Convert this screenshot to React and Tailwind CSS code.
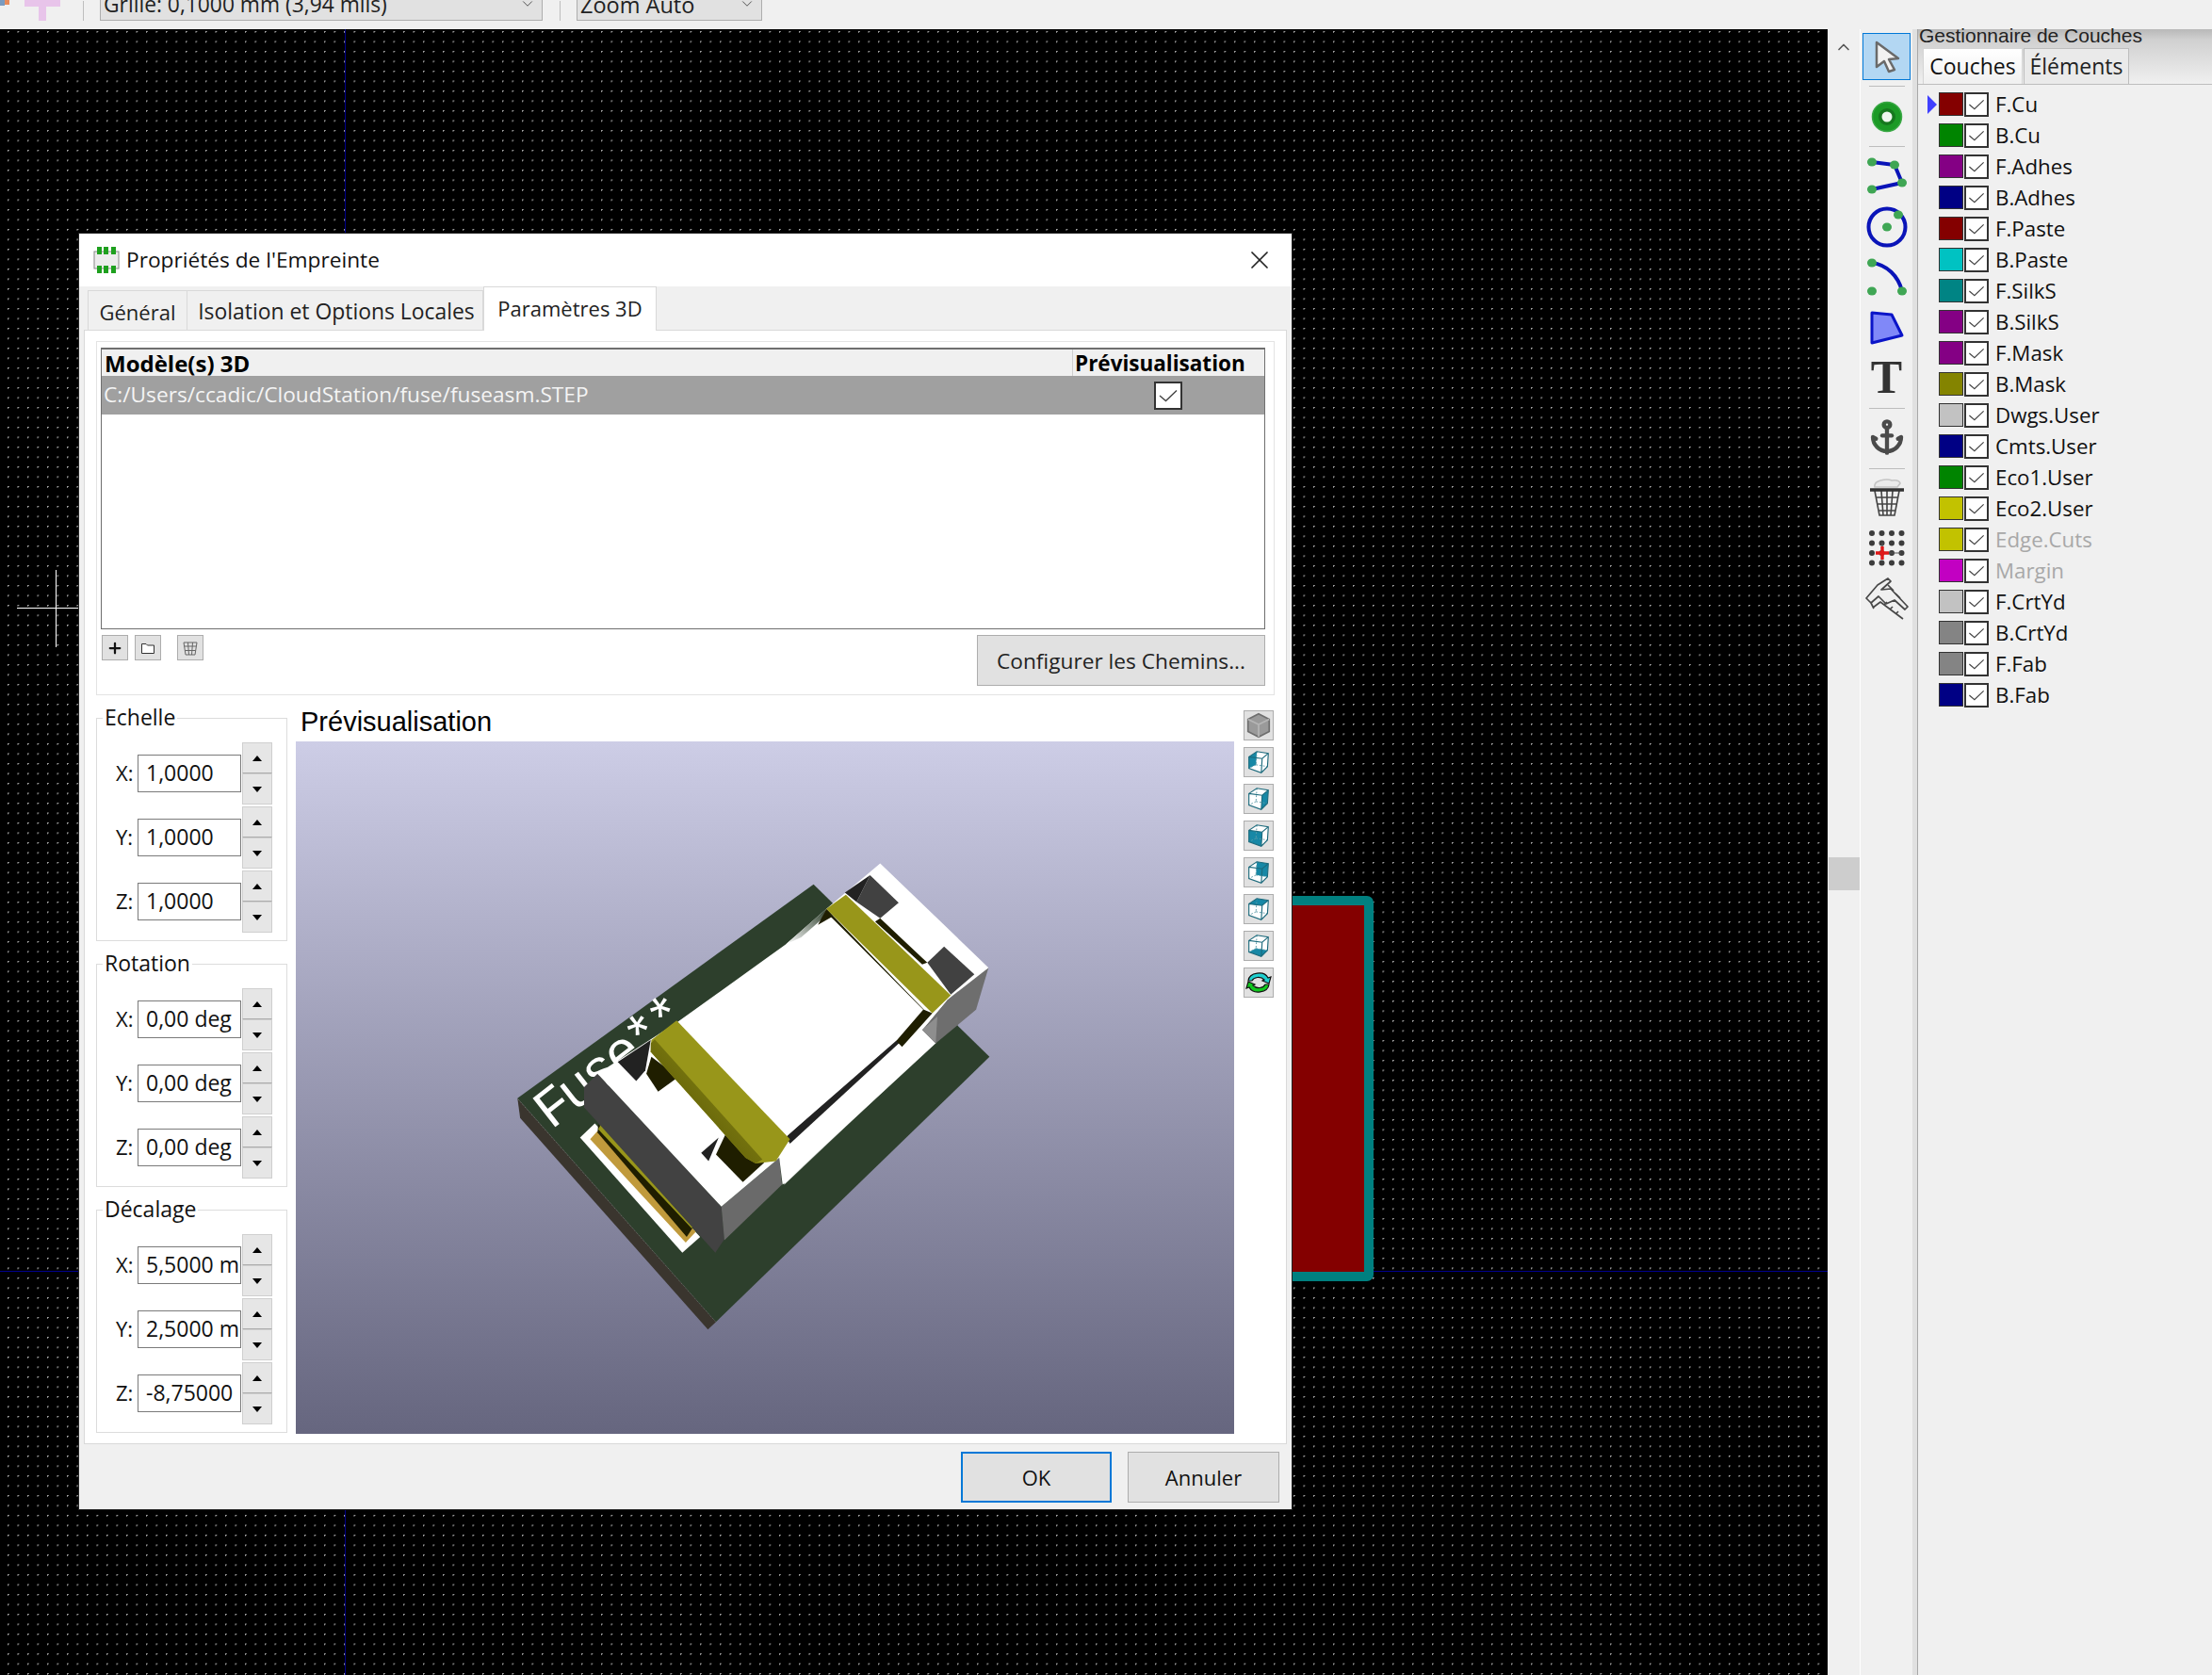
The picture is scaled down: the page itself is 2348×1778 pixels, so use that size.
import { Anchor, ChevronDown, ChevronUp, Plus, X } from 'lucide-react'

const layers = [
  { name: 'F.Cu', color: 'bg-[#840000]', active: true },
  { name: 'B.Cu', color: 'bg-[#008400]' },
  { name: 'F.Adhes', color: 'bg-[#840084]' },
  { name: 'B.Adhes', color: 'bg-[#000084]' },
  { name: 'F.Paste', color: 'bg-[#840000]' },
  { name: 'B.Paste', color: 'bg-[#00c2c2]' },
  { name: 'F.SilkS', color: 'bg-[#008484]' },
  { name: 'B.SilkS', color: 'bg-[#840084]' },
  { name: 'F.Mask', color: 'bg-[#840084]' },
  { name: 'B.Mask', color: 'bg-[#848400]' },
  { name: 'Dwgs.User', color: 'bg-[#c2c2c2]' },
  { name: 'Cmts.User', color: 'bg-[#000084]' },
  { name: 'Eco1.User', color: 'bg-[#008400]' },
  { name: 'Eco2.User', color: 'bg-[#c2c200]' },
  { name: 'Edge.Cuts', color: 'bg-[#c2c200]', dim: true },
  { name: 'Margin', color: 'bg-[#c200c2]', dim: true },
  { name: 'F.CrtYd', color: 'bg-[#c2c2c2]' },
  { name: 'B.CrtYd', color: 'bg-[#848484]' },
  { name: 'F.Fab', color: 'bg-[#848484]' },
  { name: 'B.Fab', color: 'bg-[#000084]' },
]

const groups = [
  { title: 'Echelle', values: ['1,0000', '1,0000', '1,0000'] },
  { title: 'Rotation', values: ['0,00 deg', '0,00 deg', '0,00 deg'] },
  { title: 'Décalage', values: ['5,5000 mm', '2,5000 mm', '-8,75000'] },
]

const cubeFaces = {
  left: '5,10 14,4 13,19 5,23',
  right: '20,12 27,6 26,21 19,28',
  front: '5,10 20,12 19,28 5,23',
  back: '14,4 27,6 26,21 13,19',
  top: '5,10 14,4 27,6 20,12',
  bottom: '5,23 13,19 26,21 19,28',
}

function Check({ size = 26 }) {
  return (
    <svg width={size} height={size} viewBox="0 0 26 26" fill="none">
      <path d="M4 13 L10.5 18.5 L22 7.5" stroke="#444" strokeWidth="1.4" />
    </svg>
  )
}

function CubeIcon({ face }) {
  return (
    <svg width="30" height="30" viewBox="0 0 32 32">
      <polygon points="5,10 14,4 27,6 26,21 19,28 5,23" fill="#fff" />
      <polygon points={cubeFaces[face]} fill="#1788a6" />
      <path d="M14 4 L13 19 M13 19 L5 23 M13 19 L26 21" stroke="#5a9aa8" strokeWidth="1" strokeDasharray="2 2" fill="none" />
      <path d="M5 10 L14 4 L27 6 L26 21 L19 28 L5 23 Z M5 10 L20 12 L27 6 M20 12 L19 28" stroke="#1c6a7c" strokeWidth="1.2" fill="none" />
    </svg>
  )
}

function ViewButton({ children }) {
  return <div className="w-[32px] h-[32px] bg-[#e1e1e1] border border-[#adadad] flex items-center justify-center">{children}</div>
}

function SpinRow({ axis, value }) {
  return (
    <div className="flex items-center h-[66px]">
      <span className="w-[24px] pl-[1px] text-[22px] leading-[28px] pb-[2px] text-[#111]">{axis}:</span>
      <div className="w-[110px] h-[40px] border border-[#7a7a7a] bg-white pl-[8px] text-[23px] leading-[36px] text-[#111] overflow-hidden whitespace-nowrap">{value}</div>
      <div className="ml-[1px] w-[32px] flex flex-col">
        <div className="h-[33px] bg-[#e6e6e6] border border-[#cfcfcf] border-b-[#adadad] flex items-center justify-center">
          <div className="w-0 h-0 border-x-[5px] border-x-transparent border-b-[6px] border-b-black" />
        </div>
        <div className="h-[33px] bg-[#e6e6e6] border border-[#cfcfcf] flex items-center justify-center">
          <div className="w-0 h-0 border-x-[5px] border-x-transparent border-t-[6px] border-t-black" />
        </div>
      </div>
    </div>
  )
}

function SpinGroup({ title, values }) {
  return (
    <div className="relative w-[203px] h-[237px] border border-[#dcdcdc] pl-[19px] pt-[25px]">
      <span className="absolute left-[6px] -top-[18px] bg-white px-[2px] text-[23px] text-[#111] leading-[32px]">{title}</span>
      <div className="flex flex-col gap-[2px]">
        {values.map((v, i) => (
          <SpinRow key={i} axis={['X', 'Y', 'Z'][i]} value={v} />
        ))}
      </div>
    </div>
  )
}

function Model() {
  return (
    <svg width="560" height="560" viewBox="0 0 1568 1568">
      <defs>
        <linearGradient id="strapEdge" x1="0" y1="1" x2="1" y2="0">
          <stop offset="0" stopColor="#4a4900" />
          <stop offset="1" stopColor="#98961a" />
        </linearGradient>
        <linearGradient id="fade2" x1="1" y1="0" x2="0" y2="0">
          <stop offset="0" stopColor="#ffffff" stopOpacity="0" />
          <stop offset="1" stopColor="#ffffff" />
        </linearGradient>
        <linearGradient id="notch" x1="0" y1="1" x2="1" y2="0">
          <stop offset="0" stopColor="#ffffff" />
          <stop offset="1" stopColor="#2d3f2c" />
        </linearGradient>
      </defs>
      {/* board */}
      <polygon points="82,803 672,1468 648,1490 90,862" fill="#3a352e" />
      <path d="M84 806 L672 1468" stroke="#8b8b80" strokeWidth="2" strokeDasharray="5 5" />
      <polygon points="962,167 1485,680 672,1468 82,803" fill="#2d3f2c" />
      <text x="182" y="898" transform="rotate(-38 182 898)" fontFamily="'Liberation Mono', monospace" fontSize="165" fill="#fff" textLength="530">Fuse**</text>
      {/* silk + pad at the connector front */}
      <polygon points="268,920 312,878 625,1215 572,1262" fill="#fff" />
      <polygon points="298,925 320,900 612,1200 582,1232" fill="#c09a3c" />
      <polygon points="320,905 322,880 608,1180 585,1215" fill="#1f1e00" />
      <polygon points="338,866 615,1165 600,1190 322,895" fill="#98961a" />
      {/* connector body */}
      <polygon points="320,730 280,770 280,830 670,1262 697,1222 688,1125" fill="#424242" />
      <polygon points="688,1125 860,980 868,1060 697,1225" fill="#6a6a6a" />
      <polygon points="320,730 560,575 880,345 1000,240 1160,105 1482,415 1325,640 870,1060 860,980 688,1125" fill="#fff" />
      <polygon points="1482,415 1445,540 1325,640 1285,600 1360,510" fill="#6e6e6e" />
      <polygon points="1285,600 1360,510 1440,435 1482,415 1400,470 1330,540" fill="#fff" />
      <polygon points="1285,600 1330,560 1325,640" fill="#8e8e8e" />
      <polygon points="870,985 1210,650 1260,640 1320,640 875,1060" fill="url(#fade2)" />
      <polygon points="880,345 925,325 985,272 1000,240" fill="url(#notch)" />
      {/* slot */}
      <polygon points="880,918 1240,590 1252,606 892,938" fill="#222" />
      {/* recesses */}
      <polygon points="1130,140 1215,222 1160,268 1090,220" fill="#414141" />
      <polygon points="1055,192 1130,140 1090,220" fill="#222" />
      <polygon points="1350,352 1440,435 1370,495 1300,400" fill="#414141" />
      <polygon points="1160,268 1300,400 1285,405 1145,278" fill="#1f1e00" />
      <polygon points="380,695 478,630 462,720 435,752" fill="#222" />
      <polygon points="628,965 680,920 650,990" fill="#222" />
      <polygon points="465,730 480,680 560,740 500,783" fill="#1f1e00" />
      <polygon points="672,970 705,900 815,995 752,1052" fill="#1f1e00" />
      <polygon points="975,288 1000,240 1020,262" fill="#1f1e00" />
      <polygon points="1000,240 1290,540 1315,550 1225,650 1210,635" fill="#1f1e00" />
      <polygon points="1015,265 1288,540 1210,630 880,918 600,600 880,380" fill="#fff" />
      {/* straps */}
      <polygon points="480,630 555,572 892,925 850,990 790,997 760,980 478,665" fill="#98961a" />
      <polygon points="478,640 490,628 810,985 790,997 760,980 478,665" fill="url(#strapEdge)" />
      <polygon points="1000,240 1058,198 1370,497 1315,550" fill="#98961a" />
    </svg>
  )
}

export default function App() {
  return (
    <div className="w-[2348px] h-[1778px] overflow-hidden flex flex-col bg-[#f0f0f0] font-['Open_Sans',sans-serif] text-[#111]">
      {/* Top toolbar, cut off by the screenshot */}
      <div className="h-[31px] shrink-0 bg-[#f0f0f0] flex items-end overflow-hidden pb-[9px]">
        <svg className="ml-0 mb-[-9px]" width="84" height="31" viewBox="0 0 84 31">
          <rect x="0" y="0" width="5" height="6" fill="#7a9bc0" />
          <rect x="5" y="0" width="5" height="5" fill="#e88a5a" />
          <path d="M26 0 H64 V7 H49 V22 H41 V7 H26 Z" fill="#e8c4ea" />
        </svg>
        <div className="w-px h-[21px] bg-[#bdbdbd] ml-[4px]" />
        <div className="ml-[17px] w-[470px] h-[22px] bg-[#e1e1e1] border-b border-x border-[#adadad] relative overflow-hidden">
          <span className="absolute left-[3px] bottom-[1px] text-[22.8px] leading-[30px] whitespace-nowrap text-[#222]">Grille: 0,1000 mm (3,94 mils)</span>
          <ChevronDown className="absolute right-[6px] top-[-5px] text-[#444]" size={18} strokeWidth={1.2} />
        </div>
        <div className="w-px h-[21px] bg-[#bdbdbd] ml-[18px]" />
        <div className="ml-[17px] w-[197px] h-[22px] bg-[#e1e1e1] border-b border-x border-[#adadad] relative overflow-hidden">
          <span className="absolute left-[3px] bottom-[1px] text-[23.5px] leading-[30px] whitespace-nowrap text-[#222]">Zoom Auto</span>
          <ChevronDown className="absolute right-[6px] top-[-5px] text-[#444]" size={18} strokeWidth={1.2} />
        </div>
      </div>

      <div className="flex-1 flex min-h-0">
        {/* PCB canvas */}
        <div className="relative w-[1940px] h-full bg-black overflow-hidden bg-[radial-gradient(circle_at_0.5px_0.5px,#a6a6a6_0.9px,transparent_1.1px)] bg-size-[10.5px_10.5px] bg-position-[8px_2px]">
          <div className="absolute left-[366px] top-0 bottom-0 w-px bg-[#00008c]" />
          <div className="absolute left-0 right-0 top-[1318px] h-px bg-[#00008c]" />
          <div className="absolute left-[59px] top-[574px] w-px h-[82px] bg-white" />
          <div className="absolute left-[18px] top-[614px] w-[65px] h-px bg-white" />
          {/* copper pad */}
          <div className="absolute left-[1000px] top-[920px] w-[458px] h-[409px] bg-[#840000] border-[10px] border-[#008080] rounded-tr-[7px] rounded-br-[7px]" />

          {/* Dialog window */}
          <div className="absolute left-[84px] top-[217px] w-[1287px] h-[1354px] bg-[#f0f0f0] flex flex-col shadow-[0_0_0_1px_#222]">
            <div className="h-[56px] shrink-0 bg-white flex items-center pl-[14px]">
              <svg width="30" height="30" viewBox="0 0 30 30">
                <rect x="2" y="6" width="26" height="18" fill="#ececec" stroke="#888" />
                <path d="M5 1 h5 v8 h-5 Z M12 1 h5 v8 h-5 Z M20 1 h5 v8 h-5 Z M5 21 h5 v8 h-5 Z M12 21 h5 v8 h-5 Z M20 21 h5 v8 h-5 Z" fill="#1ea01e" />
              </svg>
              <span className="ml-[6px] text-[22.7px]">Propriétés de l'Empreinte</span>
              <X className="ml-auto mr-[18px] text-[#222]" size={32} strokeWidth={1.3} />
            </div>

            {/* Tabs */}
            <div className="h-[46px] shrink-0 flex items-end pl-[9px]">
              <div className="h-[42px] w-[106px] border border-b-0 border-[#d9d9d9] flex items-center justify-center pt-[3px] text-[22px] text-[#222]">Général</div>
              <div className="h-[42px] w-[314px] border-y border-r border-b-0 border-[#d9d9d9] flex items-center justify-center pt-[3px] pl-[3px] text-[22.9px] text-[#222] whitespace-nowrap">Isolation et Options Locales</div>
              <div className="h-[47px] -mb-px relative w-[184px] bg-white border border-b-0 border-[#d9d9d9] flex items-start justify-center pt-[6px] text-[22px] text-[#222]">Paramètres 3D</div>
            </div>

            {/* Page */}
            <div className="mx-[5px] h-[1183px] shrink-0 bg-white border border-[#d9d9d9] pl-[12px] pr-[12px] pt-[11px]">
              <div className="h-[376px] border border-[#e3e3e3] pl-[4px] pt-[6px]">
                <div className="w-[1236px] h-[299px] border border-[#6f6f6f] border-t-2 bg-white">
                  <div className="h-[28px] bg-[#f0f0f0] flex">
                    <div className="w-[1030px] pl-[3px] font-bold text-[24px] leading-[30px] text-black">Modèle(s) 3D</div>
                    <div className="flex-1 border-l border-[#cfcfcf] pl-[2px] font-bold text-[22.5px] leading-[30px] text-black whitespace-nowrap">Prévisualisation</div>
                  </div>
                  <div className="h-[41px] bg-[#a0a0a0] flex items-center relative">
                    <span className="pl-[2px] text-[22.7px] text-[#f4f4f4]">C:/Users/ccadic/CloudStation/fuse/fuseasm.STEP</span>
                    <div className="absolute left-[1117px] top-[6px] w-[30px] h-[30px] bg-white border-2 border-[#333] flex items-center justify-center">
                      <Check />
                    </div>
                  </div>
                </div>
                <div className="flex items-start pt-[6px]">
                  <div className="ml-[1px] w-[28px] h-[27px] bg-[#e1e1e1] border border-[#adadad] flex items-center justify-center">
                    <Plus size={18} strokeWidth={3} className="text-[#111]" />
                  </div>
                  <div className="ml-[7px] w-[28px] h-[27px] bg-[#e1e1e1] border border-[#adadad] flex items-center justify-center">
                    <svg width="16" height="14" viewBox="0 0 16 14" fill="#fff" stroke="#333">
                      <path d="M1.5 12.5 V2.5 H6 L7.5 4 H14.5 V12.5 Z" />
                    </svg>
                  </div>
                  <div className="ml-[17px] w-[28px] h-[27px] bg-[#e1e1e1] border border-[#adadad] flex items-center justify-center">
                    <svg width="16" height="16" viewBox="0 0 16 16" fill="none" stroke="#666" strokeWidth="1">
                      <path d="M1 2 H15 L13 15 H3 Z M5.5 2 L6.5 15 M10.5 2 L9.5 15 M1.8 6 H14.2 M2.5 10.5 H13.5" />
                    </svg>
                  </div>
                  <div className="ml-auto mr-[9px] w-[306px] h-[54px] bg-[#e1e1e1] border border-[#adadad] flex items-center justify-center pt-[2px] text-[22.7px] text-[#222]">Configurer les Chemins...</div>
                </div>
              </div>

              <div className="flex pt-[16px]">
                <div className="w-[203px] pt-[8px] flex flex-col gap-[24px]">
                  {groups.map((g) => (
                    <SpinGroup key={g.title} title={g.title} values={g.values} />
                  ))}
                </div>
                <div className="ml-[9px] w-[996px]">
                  <div className="h-[33px] pl-[5px] font-['Liberation_Sans',sans-serif] text-[29px] leading-[24px] text-black">Prévisualisation</div>
                  <div className="h-[735px] bg-linear-to-b from-[#cdcde6] to-[#66667f] pl-[206px] pt-[92px]">
                    <Model />
                  </div>
                </div>
                <div className="ml-[10px] w-[32px] flex flex-col gap-[7px]">
                  <ViewButton>
                    <svg width="30" height="30" viewBox="0 0 32 32" fill="#9a9a9a" stroke="#6e6e6e" strokeWidth="1.8">
                      <path d="M16 3 L28 9 V23 L16 29 L4 23 V9 Z" />
                      <path d="M4 9 L16 15 L28 9 M16 15 V29" fill="none" stroke="#b5b5b5" />
                    </svg>
                  </ViewButton>
                  {['left', 'right', 'front', 'back', 'top', 'bottom'].map((f) => (
                    <ViewButton key={f}>
                      <CubeIcon face={f} />
                    </ViewButton>
                  ))}
                  <ViewButton>
                    <svg width="28" height="28" viewBox="0 0 28 28" stroke="#111" strokeWidth="1.2">
                      <path d="M3 12 C4 3 20 1 24 9 L27 8 L25 15 L18 12 L20 11 C16 7 9 8 7 12 Z" fill="#1fd0d0" />
                      <path d="M25 16 C24 25 8 27 4 19 L1 20 L3 13 L10 16 L8 17 C12 21 19 20 21 16 Z" fill="#10c81e" />
                    </svg>
                  </ViewButton>
                </div>
              </div>
            </div>

            {/* Footer */}
            <div className="relative flex-1 flex items-start justify-end pt-[8px] pr-[13px] gap-[17px]">
              <div className="w-[160px] h-[54px] bg-[#e1e1e1] border-2 border-[#0078d7] flex items-center justify-center text-[22px] text-[#111]">OK</div>
              <div className="w-[161px] h-[54px] bg-[#e1e1e1] border border-[#adadad] flex items-center justify-center text-[22px] text-[#111]">Annuler</div>
            </div>
          </div>
        </div>

        {/* Scroll strip */}
        <div className="w-[35px] shrink-0 bg-[#f0f0f0] border-r border-white flex flex-col items-center relative">
          <ChevronUp className="mt-[9px] text-[#555]" size={20} strokeWidth={2} />
          <div className="absolute left-[1px] top-[879px] w-[33px] h-[35px] bg-[#cdcdcd]" />
        </div>

        {/* Tool palette */}
        <div className="w-[55px] shrink-0 flex flex-col items-center pt-[4px] bg-[#f0f0f0]">
          <div className="w-[51px] h-[50px] bg-[#b3d7f3] border border-[#0078d7] flex items-center justify-center">
            <svg width="32" height="36" viewBox="0 0 32 36">
              <path d="M5 3 L28 20 L18 21 L24 32 L18 34 L13 23 L5 29 Z" fill="#f2f2f2" stroke="#6a6a6a" strokeWidth="2.5" strokeLinejoin="round" />
            </svg>
          </div>
          <div className="w-[38px] h-px my-[6px] bg-[#bdbdbd]" />
          <div className="h-[52px] flex items-center">
            <svg width="34" height="34" viewBox="0 0 34 34">
              <circle cx="17" cy="17" r="15.5" fill="#1c9a26" stroke="#3aa845" strokeWidth="1.5" />
              <circle cx="17" cy="17" r="9" fill="#16781e" />
              <circle cx="17" cy="17" r="5.5" fill="#eef6ee" />
            </svg>
          </div>
          <div className="w-[38px] h-px my-[5px] bg-[#bdbdbd]" />
          <div className="h-[53px] flex items-center">
            <svg width="44" height="44" viewBox="0 0 44 44" fill="#3fa654">
              <path d="M6 6 L30 9 L38 28 L6 35" fill="none" stroke="#0a14b8" strokeWidth="4" />
              <ellipse cx="6" cy="6" rx="5" ry="4.5" /><ellipse cx="30" cy="9" rx="5" ry="4.5" /><ellipse cx="38" cy="28" rx="5" ry="4.5" /><ellipse cx="6" cy="35" rx="5" ry="4.5" />
            </svg>
          </div>
          <div className="h-[54px] flex items-center">
            <svg width="44" height="44" viewBox="0 0 44 44" fill="#3fa654">
              <circle cx="22" cy="22" r="19.5" fill="none" stroke="#0a14b8" strokeWidth="4" />
              <ellipse cx="22" cy="22" rx="5" ry="4.5" /><ellipse cx="34" cy="9" rx="5" ry="4.5" />
            </svg>
          </div>
          <div className="h-[53px] flex items-center">
            <svg width="44" height="44" viewBox="0 0 44 44" fill="#3fa654">
              <path d="M6 6 C22 8 34 20 38 36" fill="none" stroke="#0a14b8" strokeWidth="4" />
              <ellipse cx="6" cy="6" rx="5" ry="4.5" /><ellipse cx="6" cy="36" rx="5" ry="4.5" /><ellipse cx="38" cy="36" rx="5" ry="4.5" />
            </svg>
          </div>
          <div className="h-[53px] flex items-center">
            <svg width="38" height="36" viewBox="0 0 38 36">
              <path d="M3 2 L24 4 L35 26 L3 34 Z" fill="#8088f8" stroke="#0a14c8" strokeWidth="3" strokeLinejoin="round" />
            </svg>
          </div>
          <div className="h-[54px] flex items-center justify-center pb-[2px] font-['Liberation_Serif',serif] font-bold text-[50px] leading-none text-[#333]">T</div>
          <div className="w-[38px] h-px my-[5px] bg-[#bdbdbd]" />
          <div className="h-[53px] flex items-center pb-[3px]">
            <Anchor size={40} strokeWidth={2.6} className="text-[#4a4a4a]" />
          </div>
          <div className="w-[38px] h-px my-[5px] bg-[#bdbdbd]" />
          <div className="h-[53px] flex items-center pb-[3px]">
            <svg width="38" height="42" viewBox="0 0 38 42" fill="none" stroke="#444" strokeWidth="1.6">
              <path d="M6 10 Q5 5 12 3 Q20 1 24 3 Q32 2 33 6 L30 10 Z" fill="#eaeaea" stroke="#c4c4c4" />
              <path d="M6 14 L11 40 H27 L32 14 M13 14 L15 40 M19 14 V40 M25 14 L23 40 M7 21 H31 M8.5 28 H29.5 M10 35 H28" />
              <path d="M1 13 H37" strokeWidth="3.5" stroke="#333" />
            </svg>
          </div>
          <div className="h-[53px] flex items-center pb-[2px]">
            <svg width="40" height="40" viewBox="0 0 40 40" fill="#3c3c3c">
              {[4, 14.5, 25, 35.5].map((x) => [4, 14.5, 25, 35.5].map((y) => <circle key={`${x}-${y}`} cx={x} cy={y} r="3" />))}
              <path d="M15 14.5 V25 M15 25 H35" stroke="#555" strokeWidth="1.2" />
              <path d="M15 18 V32 M8 25 H22" stroke="#e01818" strokeWidth="3.4" />
            </svg>
          </div>
          <div className="h-[53px] flex items-center">
            <svg width="46" height="46" viewBox="0 0 46 46" fill="none" stroke="#484848" strokeWidth="1.7" strokeLinejoin="round">
              <path d="M1 22 L13 8 L24 1 L27 4 L17 13 L27 12 L45 31 L42 34 L31 24 L22 28 L14 20 L6 27 Z" />
              <path d="M8 32 L16 26 L40 44 M6 27 L9 33 M20 29 L23 26 M26 34 L29 31 M32 39 L35 36 M24 8 L30 14 M32 17 L37 22" />
            </svg>
          </div>
        </div>

        <div className="w-[5px] shrink-0 bg-[#e0e0e0]" />

        {/* Layer manager */}
        <div className="flex-1 bg-[#f0f0f0] border-l border-[#a8a8a8] flex flex-col min-w-0">
          <div className="h-[11px] relative bg-linear-to-b from-[#b8b8b8] to-[#d0d0d0]">
            <span className="absolute left-[1px] -top-[2px] h-[16px] overflow-hidden font-['Liberation_Sans',sans-serif] text-[21px] leading-[18px] whitespace-nowrap text-[#222]">Gestionnaire de Couches</span>
          </div>
          <div className="h-[48px] flex items-end pl-[5px] bg-linear-to-b from-[#d0d0d0] to-[#f0f0f0] border-b border-[#bdbdbd]">
            <div className="w-[106px] h-[38px] bg-linear-to-b from-white to-[#f0f0f0] border-x border-t border-[#d4d4d4] flex items-center justify-center text-[23px] text-[#111]">Couches</div>
            <div className="ml-px w-[112px] h-[38px] border-x border-t border-[#bdbdbd] bg-[#eaeaea] flex items-center justify-center text-[23px] text-[#222]">Éléments</div>
          </div>
          <div className="pt-[4px] flex flex-col">
            {layers.map((l) => (
              <div key={l.name} className="h-[33px] flex items-center pl-[10px]">
                <div className="w-[12px] h-[20px] flex items-center">
                  {l.active && <div className="w-0 h-0 border-y-[10px] border-y-transparent border-l-[10px] border-l-[#4040ff]" />}
                </div>
                <div className={`w-[26px] h-[25px] border border-[#333] ${l.color}`} />
                <div className="ml-px w-[26px] h-[26px] bg-white border-2 border-[#333] flex items-center justify-center">
                  <Check size={22} />
                </div>
                <span className={`ml-[7px] text-[22.3px] ${l.dim ? 'text-[#a8a8a8]' : 'text-[#111]'}`}>{l.name}</span>
              </div>
            ))}
          </div>
        </div>
      </div>
    </div>
  )
}
